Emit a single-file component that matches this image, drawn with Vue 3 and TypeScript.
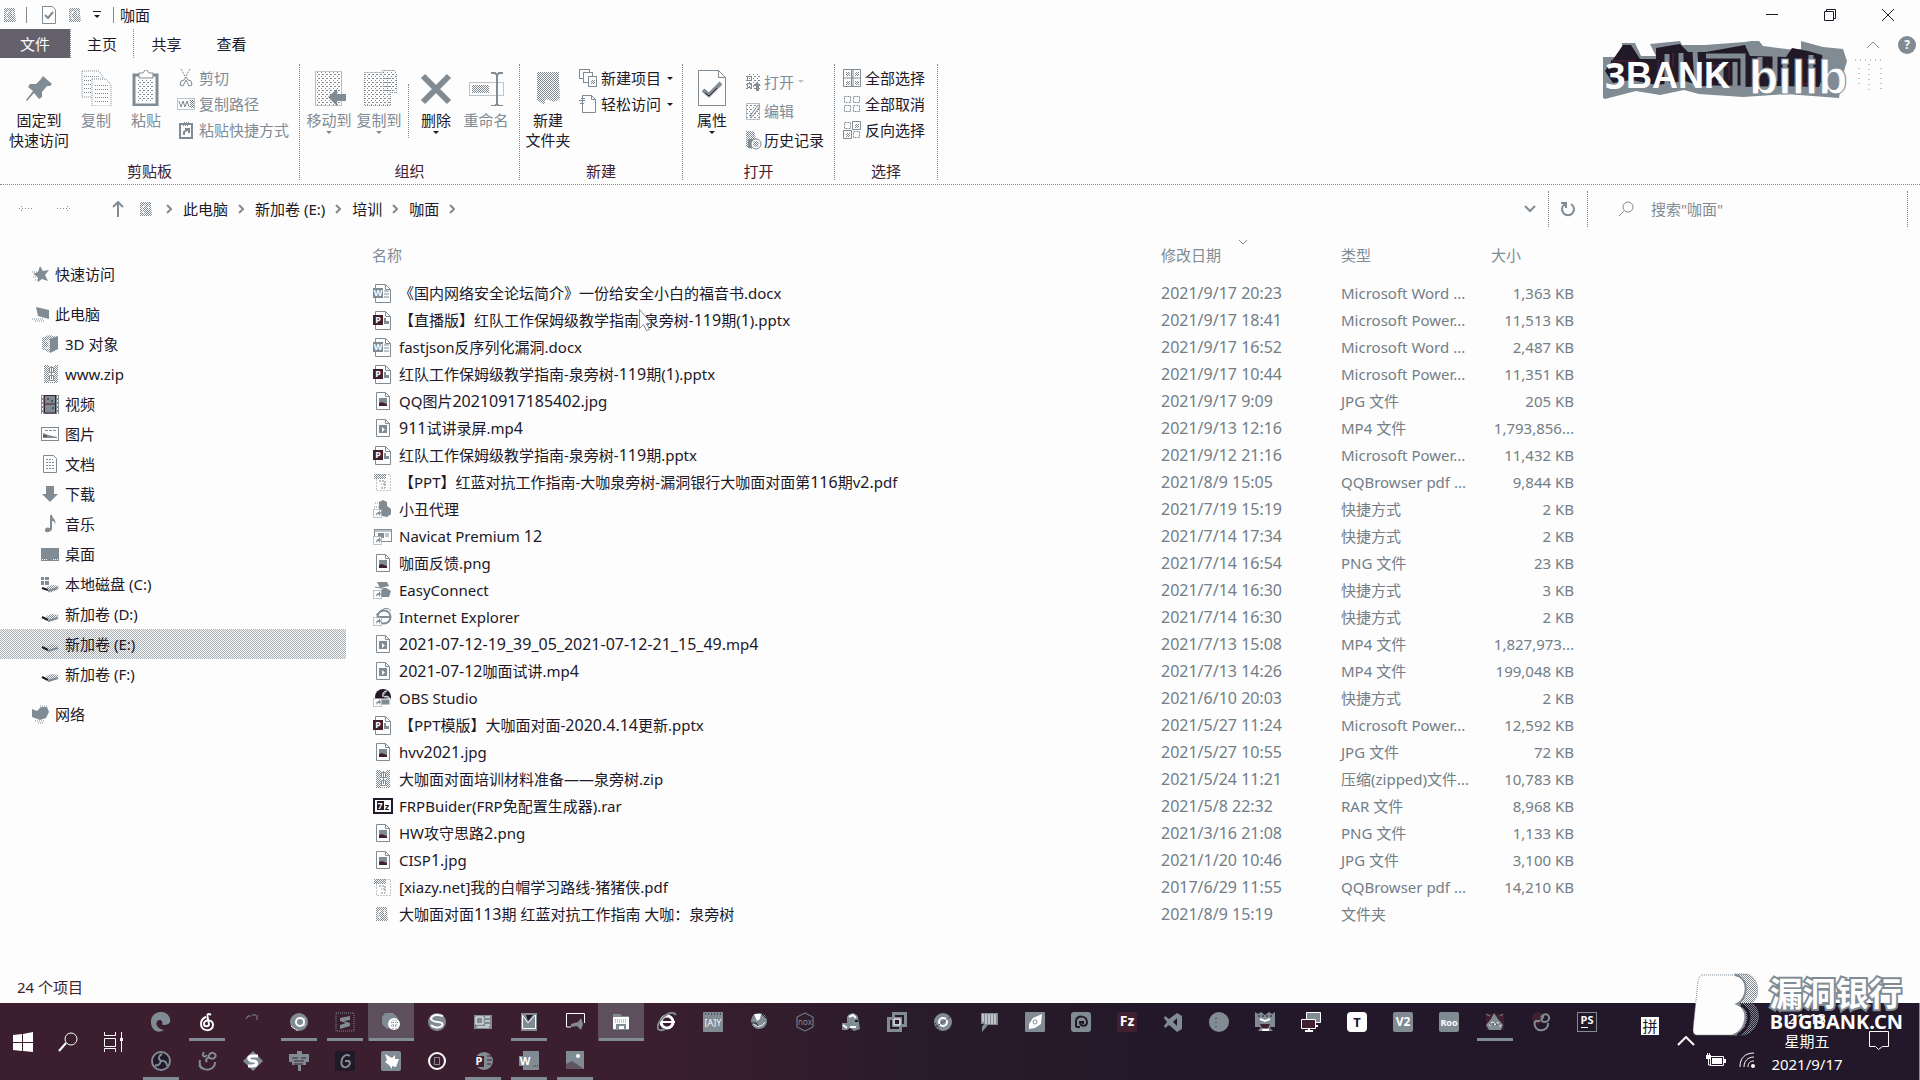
<script setup lang="ts">
interface Run { text: string; num: boolean }
interface FileRow { icon: string; name: string; date: string; type: string; size: string }
interface Place { icon: string; label: string; level: number; selected?: boolean; gap?: boolean }
interface TaskApp { icon: string; name: string; running?: boolean; active?: boolean }

const G = '#808b94'
const W = '#fdfdfd'
const D = '#211828'
const M = '#40202f'
const H = 'url(#halftone)'
const L = 'url(#speckle)'

const sheet = `<path d="M4.5 1.5h9l4 4v13h-13z" fill="${W}" stroke="${G}"/><path d="M13.5 1.5v4h4" fill="none" stroke="${G}"/>`
const badge = (letter: string, fill: string) =>
  `<path d="M3.5 1.5h10l5 5v13h-15z" fill="${W}" stroke="${G}"/><path d="M13.500 1.500v5h5" fill="none" stroke="${G}"/><rect x="1" y="5" width="10" height="10" fill="${fill}"/><text x="6" y="13" text-anchor="middle" font-family="Noto Sans, sans-serif" font-size="9" font-weight="700" fill="${W}">${letter}</text>`
const shortcut = `<rect x="1.500" y="10.500" width="8" height="8" fill="${W}" stroke="${G}" stroke-dasharray="1 1"/><path d="M4 17c0-3 1-4 3-4v-2l2 3-2 3v-2c-1 0-2 0-3 2z" fill="${G}"/>`
const tile = (label: string, fill: string, ink: string, size = 10) =>
  `<rect width="20" height="20" rx="2" fill="${fill}"/><text x="10" y="14" text-anchor="middle" font-family="Noto Sans, sans-serif" font-size="${size}" font-weight="700" fill="${ink}">${label}</text>`

const icons: Record<string, string> = {
  word: badge('W', G) + `<path d="M12 8h5M12 11h5M12 14h5" stroke="${G}"/>`,
  ppt: badge('P', M) + `<path d="M12 8v6h5v-3h-3V8z" fill="${G}"/>`,
  image: sheet + `<rect x="7" y="7" width="8" height="8" fill="${G}"/><path d="M7 15v-3l3-1 2 1 3 1v2z" fill="${M}"/>`,
  video: sheet + `<rect x="7" y="7" width="8" height="8" fill="${G}"/><path d="M10 9v5l3-2.500z" fill="${W}"/>`,
  pdf: `<rect x="4.500" y="2.500" width="14" height="16" fill="none" stroke="${G}" stroke-dasharray="1 2"/><rect x="2" y="2" width="12" height="5" fill="${H}"/><path d="M7 9h6v3H9M13 12v4H8" fill="none" stroke="${G}" stroke-dasharray="2 1"/>`,
  clown: `<path d="M7 3l4-2 4 2v4l4 3v5l-4 3-5-1-3-7z" fill="${G}"/><path d="M3 4h4M2 8h5" stroke="${G}" stroke-dasharray="1 1"/>` + shortcut,
  navicat: `<rect x="2.500" y="3.500" width="17" height="12" fill="${W}" stroke="${G}"/><path d="M3 5h16M13 8h4M13 10h4" stroke="${G}"/><path d="M6 7h6v5H6z" fill="${G}"/>` + shortcut,
  easy: `<path d="M5 2h10l2 4-9 2zM9 10l5-2 5 3-2 6H9z" fill="${G}"/><path d="M3 7l12 2" stroke="${G}"/>` + shortcut,
  ie: `<circle cx="12" cy="10" r="6.500" fill="none" stroke="${G}" stroke-width="2"/><path d="M6 10h12" stroke="${G}" stroke-width="2"/><path d="M4 8Q14-3 19 4" fill="none" stroke="${G}"/>` + shortcut,
  obs: `<circle cx="11" cy="9" r="8" fill="${D}"/><path d="M11 9c-1-4 1-6 4-6M12 9c3-2 6 0 6 3M9 11h9v6H9z" fill="${G}" stroke="${W}"/>` + shortcut,
  zip: `<rect x="4" y="1" width="14" height="18" fill="${H}"/><path d="M9 1h5v17H9z" fill="${W}"/><path d="M11.500 2v13M9.500 3.500h4v5h-4zM9.500 11.500h4v5h-4z" fill="none" stroke="${G}"/>`,
  seven: `<rect x="2" y="3" width="18" height="14" fill="${W}" stroke="${D}" stroke-width="2"/><rect x="5" y="5" width="7" height="9" fill="${D}"/><text x="8" y="13" text-anchor="middle" font-family="Noto Sans, sans-serif" font-size="9" font-weight="700" fill="${W}">7</text><text x="15" y="14" text-anchor="middle" font-family="Noto Sans, sans-serif" font-size="9" font-weight="700" fill="${D}">z</text>`,
  folder: `<path d="M4 3h11v5l1 9H4v-7z" fill="${H}"/><path d="M9 5l-3 5 2 5M12 6l1 5" fill="none" stroke="${W}"/>`,
  star: `<path d="M9 2l3 5 6-1-4 5 3 6-6-2-4 3 0-5-5-3 5-2z" fill="${G}"/><path d="M1 8h5M2 13h5M4 16h4" stroke="${G}" stroke-dasharray="1 1"/>`,
  pc: `<path d="M5 3l13 3v9L7 12z" fill="${G}"/><path d="M1 15h12M4 17h9" stroke="${G}" stroke-dasharray="1 1"/>`,
  cube: `<path d="M2 4l7-3 9 2v12l-8 4-8-4z" fill="${H}"/><path d="M10 5l8-3v13l-8 4z" fill="${G}"/><path d="M5 7h4v7H5" fill="none" stroke="${W}"/>`,
  film: `<rect x="1" y="1" width="18" height="19" fill="${G}"/><path d="M4.500 1v18M15.500 1v18M5 10h11M5 1.500h11M5 19h11" stroke="${M}"/><path d="M2.500 2v18M17.500 2v18" stroke="${W}" stroke-dasharray="2 2"/><path d="M7 5h2M11 7h2M12 14h2" stroke="${D}"/>`,
  picture: `<rect x="1.500" y="3.500" width="17" height="13" fill="${W}" stroke="${G}"/><path d="M3 14v-5l5 2 9 2v1z" fill="${G}"/><path d="M5 6.500h11" stroke="${G}" stroke-dasharray="3 1"/><path d="M3 12h4" stroke="${M}"/>`,
  doc: `<path d="M3.500 1.500h10l3 3v14h-13z" fill="${W}" stroke="${G}"/><path d="M6 5.500h7M6 8.500h8M6 11.500h8M6 14.500h8" stroke="${G}" stroke-dasharray="2 1"/>`,
  down: `<path d="M6 2h8v8h4l-8 8-8-8h4z" fill="${G}"/>`,
  music: `<path d="M10 1h2c0 4 5 4 3 10 0-3-1-4-3-4v8c-1 4-8 4-7 1 0-3 3-3 5-2z" fill="${G}"/>`,
  desktop: `<rect x="1" y="4" width="18" height="13" fill="${G}"/><path d="M2 15.500h5M13 15.500h5" stroke="${W}" stroke-dasharray="1 1"/>`,
  drive: `<path d="M6 12l6-2 7 1-2 4-8 3z" fill="${H}"/><path d="M2 13l6 3" stroke="${D}" stroke-width="2"/><path d="M8 17l10-3" stroke="${G}" stroke-width="2"/>`,
  system: `<path d="M1 3h3v3H1zM5 3h4v3H5zM1 7h3v4H1zM5 7h4v4H5z" fill="${G}"/><path d="M6 13l6-2 7 1-2 4-8 3z" fill="${H}"/><path d="M2 14l6 2" stroke="${D}" stroke-width="2"/><path d="M8 17l10-3" stroke="${G}" stroke-width="2"/>`,
  network: `<path d="M1 5l5 2 4-4 6 0 2 5-3 6-6 2-8-3z" fill="${G}"/><path d="M4 17h10M9 2h7M7 19h5" stroke="${G}" stroke-dasharray="1 1"/>`,
}

const small: Record<string, string> = {
  cut: `<path d="M5 1l5 9M14 1l-5 9" stroke="${G}" stroke-dasharray="2 1" fill="none"/><path d="M10 9l-2 3-3 1-1 4 3 1 2-4 1-2 1 2 2 4 3-1-1-4-3-1z" fill="none" stroke="${G}" stroke-width="1"/>`,
  path: `<rect x="1.500" y="4.500" width="17" height="11" fill="none" stroke="${G}" stroke-dasharray="1 1"/><path d="M3 7l2 6 2-6 2 6 2-6 2 6" fill="none" stroke="${G}" stroke-width="1"/><rect x="14" y="6" width="4" height="8" fill="${H}"/>`,
  link: `<rect x="4" y="4" width="12" height="14" fill="${W}" stroke="${G}" stroke-width="2"/><path d="M7 2h6v4H7z" fill="${H}"/><path d="M8 15l0-3 4-3M9 9h4v4" fill="none" stroke="${G}" stroke-width="2"/>`,
  items: `<rect x="1.500" y="1.500" width="10" height="9" fill="${W}" stroke="${G}"/><rect x="5.500" y="4.500" width="9" height="10" fill="${W}" stroke="${G}"/><rect x="10.500" y="8.500" width="8" height="10" fill="${W}" stroke="${G}"/><path d="M13 12h4v4h-4z" fill="${H}"/>`,
  easy: `<path d="M4.500 1.500h9l4 4v13h-13z" fill="${W}" stroke="${G}"/><path d="M13.500 1.500v4h4M1 6.500h6M2 9.500h4M3 4.500h4" fill="none" stroke="${G}"/>`,
  open: `<rect x="3" y="1" width="14" height="17" fill="${L}"/><path d="M4.500 4.500h4v4h-4zM4.500 11.500h4v4h-4z" fill="none" stroke="${G}"/><path d="M13 19v-5h-3l4-4 4 4h-2v5z" fill="${G}"/>`,
  edit: `<rect x="3.500" y="2.500" width="13" height="16" fill="${L}" stroke="${G}" stroke-dasharray="1 1"/><path d="M7 15l8-11 2 1-7 10z" fill="${W}" stroke="${G}"/>`,
  history: `<path d="M3 1h8l2 8v8l-5 2-5-2z" fill="${H}"/><path d="M5 9h5v9H5z" fill="${G}"/><circle cx="13" cy="14" r="5" fill="${W}" stroke="${G}"/><circle cx="13" cy="14" r="3" fill="${H}"/>`,
  all: `<path d="M1.500 1.500h17v17h-17zM9.500 1v18M11 1.500v17M1 10h18" fill="none" stroke="${G}"/><path d="M4 4h4v4H4zM13 4h4v4h-4zM4 13h4v4H4zM13 13h4v4h-4z" fill="${H}"/>`,
  none: `<path d="M2.500 2.500h6v6h-6zM11.500 2.500h6v6h-6zM2.500 11.500h6v6h-6zM11.500 11.500h6v6h-6z" fill="none" stroke="${G}" stroke-dasharray="2 1"/>`,
  invert: `<path d="M2.500 2.500h6v6h-6zM11.500 11.500h6v6h-6z" fill="none" stroke="${G}" stroke-dasharray="2 1"/><path d="M10.500 1.500h8v8h-8zM1.500 10.500h8v8h-8z" fill="none" stroke="${G}"/><path d="M13 4h4v4h-4zM4 13h4v4H4z" fill="${H}"/>`,
}

const large: Record<string, string> = {
  pin: `<path d="M22 6l9 8-2 2-3 0-5 6 0 5-3 2-5-6-7 8-1-1 7-9-5-4 2-3 6 0 5-5z" fill="${G}"/>`,
  copy: `<path d="M4 1h17l4 6v20H4z" fill="${W}" stroke="${G}" stroke-dasharray="1 1"/><path d="M6 6.500h16M6 10.500h16M6 14.500h10M6 18.500h8M6 22.500h8" stroke="${G}" stroke-dasharray="1 1"/><path d="M14 9h14l5 6v21H14z" fill="${W}" stroke="${G}" stroke-dasharray="1 1"/><path d="M17 15.500h14M17 19.500h14M17 23.500h14M17 27.500h14M17 31.500h14" stroke="${G}" stroke-dasharray="1 1"/>`,
  paste: `<rect x="6" y="5" width="23" height="30" fill="${W}" stroke="${G}" stroke-width="3"/><path d="M10 9h15v23H10z" fill="${L}"/><path d="M11 3h4l2-3h2l2 3h4v5H11z" fill="${W}" stroke="${G}"/>`,
  move: `<path d="M4.500 1.500h26v34h-26z" fill="${L}" stroke="${G}" stroke-dasharray="1 1"/><path d="M17 27l9-8v5h9v7h-9v5z" fill="${G}"/>`,
  copyto: `<path d="M3.500 2.500h18v-2h12l2 4v18h-6v13h-26z" fill="${L}" stroke="${G}" stroke-dasharray="1 1"/><path d="M22 8.500h12M22 12.500h12M22 16.500h12M22 20.500h12" stroke="${G}" stroke-dasharray="2 1"/>`,
  del: `<path d="M5 6l26 26M31 6L5 32" stroke="${G}" stroke-width="6"/>`,
  rename: `<rect x="1.500" y="12.500" width="34" height="13" fill="none" stroke="${G}" stroke-dasharray="1 1"/><rect x="4" y="15" width="17" height="8" fill="${H}"/><path d="M29 5v29M23 3h4l2 2 2-2h4M23 36h4l2-2 2 2h4" fill="none" stroke="${G}" stroke-width="2"/>`,
  newfolder: `<path d="M7 2h22v9l1 18-6 3-8-3-2 6-7-5z" fill="${H}"/>`,
  props: `<path d="M4.500 0.500h20l7 7v28h-27z" fill="${W}" stroke="${G}"/><path d="M24.500 0.500v7h7" fill="none" stroke="${G}"/><path d="M9 20l6 5 12-12" fill="none" stroke="${G}" stroke-width="4"/><path d="M11 23l4 3 8-8" fill="none" stroke="${M}"/>`,
}

const apps: Record<string, string> = {
  edge: `<path d="M10 0c6 0 10 5 9 10-1 3-6 4-9 2 2-1 1-4-2-4-4 1-4 8 5 10-8 5-14-2-13-10C1 3 5 0 10 0z" fill="${G}"/><path d="M8 9c2-1 4 1 2 4 3 2 7 1 9-2" fill="none" stroke="${D}"/>`,
  music: `<path d="M14 3c-4-3-4 1-3 4l1 5c0 3-5 3-5 0 0-5 9-5 9 1 0 7-12 7-12-1 0-4 2-6 5-7" fill="none" stroke="${W}" stroke-width="2"/>`,
  faint: `<path d="M3 7l2-3M9 3h4M14 3v5M5 4h3" stroke="${G}"/>`,
  ring: `<circle cx="10" cy="10" r="9" fill="${G}"/><circle cx="11" cy="10" r="4" fill="none" stroke="${W}" stroke-width="2"/><path d="M15 6v9M2 14l7 5" stroke="${W}" stroke-dasharray="2 1"/>`,
  sublime: `<rect x="1" y="1" width="18" height="18" fill="none" stroke="${G}" stroke-dasharray="1 1"/><path d="M15 4v4L9 9l6 2v3L5 17v-4l6-2-6-2V6z" fill="${G}"/>`,
  wechat: `<path d="M4 1h8l5 5-2 8-9 3-5-5V5z" fill="${G}"/><circle cx="13" cy="12" r="6" fill="${W}"/><path d="M10 10.500h7M10 13.500h6M12 8v9M15 8v9" stroke="${G}" stroke-dasharray="1 1"/>`,
  sogou: `<circle cx="10" cy="10" r="9" fill="${G}"/><path d="M16 4Q5 1 4 7c2 5 14 1 11 7-4 3-9 1-11-1" fill="none" stroke="${W}" stroke-width="2"/>`,
  outlook: `<rect x="1" y="3" width="18" height="14" fill="${G}"/><path d="M3 5h7v7H3zM12 5h5M12 9h5M12 13h5M4 15h12" fill="none" stroke="${W}"/>`,
  vm: `<rect x="2" y="1" width="16" height="18" fill="${G}"/><path d="M3.500 3v13.500h13V3M4 4l5 7 7-8" fill="none" stroke="${W}"/><path d="M7 3h7l-5 6z" fill="${D}"/>`,
  cast: `<path d="M6 15H1.500V1.500h18V11" fill="none" stroke="${W}"/><path d="M6 12l7-2 3-4 2 6-2 6-4-4-6 1z" fill="${G}"/>`,
  explorer: `<path d="M2 2h7l2 2h7v14H2z" fill="${G}"/><path d="M2 5h16v12h-3v-5H5v5H2zM8 14h5v3H8z" fill="${W}"/><path d="M4 8h12M4 10h12" stroke="${G}" stroke-dasharray="1 1"/>`,
  ie: `<circle cx="10" cy="10" r="6" fill="none" stroke="${W}" stroke-width="3"/><path d="M5 10h13" stroke="${W}" stroke-width="2"/><path d="M1 17C-2 11 13-5 19 3M1 17c2 2 5 1 7 0" fill="none" stroke="${G}" stroke-width="2"/>`,
  calc: `<rect width="20" height="20" rx="1" fill="${G}"/><text x="10" y="14" text-anchor="middle" font-family="Noto Sans, sans-serif" font-size="9" fill="${W}">[A]Y</text><path d="M2 2h16" stroke="${D}" stroke-dasharray="1 2"/>`,
  ball: `<circle cx="10" cy="9" r="8" fill="${G}"/><path d="M5 2h7l-1 5-3 2z" fill="${W}"/><path d="M4 11c3 5 9 4 12-1" fill="none" stroke="${W}"/><path d="M2 11h5l2 3M13 2l4 4" fill="none" stroke="${D}"/>`,
  nox: `<path d="M10 1l8 4v10l-8 4-8-4V5z" fill="none" stroke="${G}"/><text x="10" y="13" text-anchor="middle" font-family="Noto Sans, sans-serif" font-size="8" fill="${G}">nox</text>`,
  elephant: `<path d="M1 18v-7h5V5c2-5 9-5 11 0l2 12-6 2-4-3-3 2z" fill="${G}"/><path d="M8 5l4-2 3 3M2 13l4 3M9 15h6" fill="none" stroke="${W}" stroke-width="2"/><path d="M14 9h3" stroke="${D}" stroke-width="2"/>`,
  vmware: `<path d="M1.500 6.500h12v12h-12zM6.500 1.500h12v12h-12z" fill="none" stroke="${G}" stroke-width="3"/><path d="M7 7h6v6H7z" fill="none" stroke="${W}"/>`,
  disc: `<circle cx="10" cy="10" r="9" fill="${G}"/><circle cx="10" cy="10" r="4" fill="none" stroke="${W}" stroke-width="2"/><path d="M3 15l14-10M2 11l4 6" stroke="${D}" stroke-dasharray="1 1"/>`,
  note: `<path d="M2 1h17v12H9l-6 7v-5l2-3H2z" fill="${G}"/><path d="M3 3h14M3 5h14M3 7h14M3 9h14M6 11h11" stroke="${W}" stroke-dasharray="2 1"/>`,
  leaf: `<rect width="20" height="20" rx="1" fill="${G}"/><path d="M17 2l-1 10-6 4-6 1 0-5 4-6z" fill="${W}"/><circle cx="10" cy="10" r="2" fill="none" stroke="${G}"/>`,
  dev: `<rect width="20" height="20" rx="3" fill="${G}"/><path d="M5 15V9c0-6 11-6 11 1 0 5-7 5-7 0h3v2M5 15h4" fill="none" stroke="${D}" stroke-width="2"/>`,
  filezilla: tile('Fz', M, W, 14),
  vscode: `<path d="M14 1l5 3v13l-5 3-8-7-4 3-1-2 3-4-3-4 1-2 4 3zM14 6l-4 4 4 4z" fill="${G}"/>`,
  circle: `<circle cx="10" cy="10" r="10" fill="${G}"/><path d="M7 6v9" stroke="${M}" stroke-dasharray="1 3"/>`,
  rhino: `<path d="M0 0l3 2 3-2 4 3 4-3 3 2 3-2v15H0z" fill="${G}"/><path d="M3 7h14l-2 9 3 3H3l3-4z" fill="${G}"/><path d="M5 12h10l-2 4H7z" fill="${M}"/><path d="M5 7l5 2 5-2M7 18h7" fill="none" stroke="${W}" stroke-width="2"/><path d="M3 4h14" stroke="${D}" stroke-dasharray="2 2"/>`,
  remote: `<path d="M5.500 0.500h14v10h-14z" fill="${G}" stroke="${W}"/><path d="M0.500 7.500h14v9h-14z" fill="${M}" stroke="${W}"/><path d="M4 19h8M8 17v3M16 13v2" stroke="${W}" stroke-width="2"/>`,
  typora: `<rect width="20" height="20" rx="4" fill="${W}"/><text x="10" y="15" text-anchor="middle" font-family="Noto Sans, sans-serif" font-size="13" font-weight="700" fill="${D}">T</text>`,
  v2: tile('V2', G, W, 12),
  rdo: tile('Roo', G, W, 9),
  fire: `<path d="M1 2h18v16H1z" fill="${M}"/><path d="M9 1l4 6 5 6-2 5H4l-3-5 5-6z" fill="${G}"/><path d="M5 14c0-5 4-5 5-1 2-4 6-2 5 2" fill="none" stroke="${W}"/><path d="M1 2l4 2M15 4l3-2" stroke="${G}"/><path d="M5 12h10" stroke="${D}" stroke-dasharray="1 2"/>`,
  swirl: `<circle cx="7" cy="6" r="6" fill="${M}"/><path d="M10 5c7-8 12 4 4 5-4 0-5-4-1-5M4 9c-3 12 14 12 13 2M4 9h5" fill="none" stroke="${G}" stroke-width="2"/>`,
  ps: `<rect x="0.500" y="0.500" width="19" height="19" fill="${D}" stroke="${G}"/><text x="10" y="12" text-anchor="middle" font-family="Noto Sans, sans-serif" font-size="11" font-weight="700" fill="${W}">PS</text><path d="M4 15.500h7" stroke="${W}"/>`,
  obs: `<circle cx="10" cy="10" r="9" fill="${D}" stroke="${G}" stroke-width="2"/><path d="M10 10c-3-2-3-5 1-7M10 10c4-1 6 2 6 5M10 10c-1 4-4 5-6 4" fill="none" stroke="${G}" stroke-width="2"/>`,
  coil: `<path d="M7 1c-3 4 1 6 3 3M12 7c-1-4 3-7 6-4 2 3-2 6-5 4-3-1-5 2-3 4M3 9c-3 13 16 12 15 2M5 18l-3-4" fill="none" stroke="${G}" stroke-width="2"/>`,
  snip: `<path d="M10 0l10 10-10 10L0 10z" fill="${G}"/><path d="M15 5H9c-5 0-4 5 1 5s5 5-1 5H5" fill="none" stroke="${W}" stroke-width="3"/>`,
  robot: `<path d="M0 3h8V0h5v3h7v8h-3v3h-5v6H9v-6H3v-3H0z" fill="${G}"/><path d="M3 7h6M12 7h5M5 10h10M5 13h9" stroke="${M}"/>`,
  gmark: `<rect width="20" height="20" fill="${D}"/><path d="M15 5c-7-5-12 9-6 11 5 1 7-4 5-6h-4" fill="none" stroke="${G}" stroke-width="2"/>`,
  bird: `<rect width="20" height="20" rx="2" fill="${G}"/><path d="M4 3l7 4 3-3v4h4l-3 8-4-1 0 3-3-4-4-3 2-2z" fill="${W}"/>`,
  target: `<ellipse cx="10" cy="10" rx="8" ry="8" fill="none" stroke="${W}" stroke-width="2"/><rect x="7.500" y="6.500" width="5" height="7" fill="none" stroke="${G}"/>`,
  powerpoint: `<circle cx="11" cy="10" r="9" fill="${G}"/><path d="M14 5h5M14 9h5M14 13h4" stroke="${M}"/><rect y="5" width="11" height="11" fill="${M}"/><text x="6" y="14" text-anchor="middle" font-family="Noto Sans, sans-serif" font-size="11" font-weight="700" fill="${W}">P</text>`,
  winword: `<rect x="4" width="16" height="19" fill="${G}"/><path d="M14 15h5" stroke="${M}" stroke-dasharray="1 1"/><rect y="5" width="12" height="10" fill="${G}"/><text x="6" y="14" text-anchor="middle" font-family="Noto Sans, sans-serif" font-size="11" font-weight="700" fill="${W}">W</text>`,
  photo: `<rect x="1" width="18" height="18" fill="${G}"/><path d="M1 13l6-3 12 8H1z" fill="#60555f"/><circle cx="13" cy="5" r="2" fill="${W}"/>`,
}

const files: FileRow[] = [
  { icon: 'word', name: '《国内网络安全论坛简介》一份给安全小白的福音书.docx', date: '2021/9/17 20:23', type: 'Microsoft Word ...', size: '1,363 KB' },
  { icon: 'ppt', name: '【直播版】红队工作保姆级教学指南-泉旁树-119期(1).pptx', date: '2021/9/17 18:41', type: 'Microsoft Power...', size: '11,513 KB' },
  { icon: 'word', name: 'fastjson反序列化漏洞.docx', date: '2021/9/17 16:52', type: 'Microsoft Word ...', size: '2,487 KB' },
  { icon: 'ppt', name: '红队工作保姆级教学指南-泉旁树-119期(1).pptx', date: '2021/9/17 10:44', type: 'Microsoft Power...', size: '11,351 KB' },
  { icon: 'image', name: 'QQ图片20210917185402.jpg', date: '2021/9/17 9:09', type: 'JPG 文件', size: '205 KB' },
  { icon: 'video', name: '911试讲录屏.mp4', date: '2021/9/13 12:16', type: 'MP4 文件', size: '1,793,856...' },
  { icon: 'ppt', name: '红队工作保姆级教学指南-泉旁树-119期.pptx', date: '2021/9/12 21:16', type: 'Microsoft Power...', size: '11,432 KB' },
  { icon: 'pdf', name: '【PPT】红蓝对抗工作指南-大咖泉旁树-漏洞银行大咖面对面第116期v2.pdf', date: '2021/8/9 15:05', type: 'QQBrowser pdf ...', size: '9,844 KB' },
  { icon: 'clown', name: '小丑代理', date: '2021/7/19 15:19', type: '快捷方式', size: '2 KB' },
  { icon: 'navicat', name: 'Navicat Premium 12', date: '2021/7/14 17:34', type: '快捷方式', size: '2 KB' },
  { icon: 'image', name: '咖面反馈.png', date: '2021/7/14 16:54', type: 'PNG 文件', size: '23 KB' },
  { icon: 'easy', name: 'EasyConnect', date: '2021/7/14 16:30', type: '快捷方式', size: '3 KB' },
  { icon: 'ie', name: 'Internet Explorer', date: '2021/7/14 16:30', type: '快捷方式', size: '2 KB' },
  { icon: 'video', name: '2021-07-12-19_39_05_2021-07-12-21_15_49.mp4', date: '2021/7/13 15:08', type: 'MP4 文件', size: '1,827,973...' },
  { icon: 'video', name: '2021-07-12咖面试讲.mp4', date: '2021/7/13 14:26', type: 'MP4 文件', size: '199,048 KB' },
  { icon: 'obs', name: 'OBS Studio', date: '2021/6/10 20:03', type: '快捷方式', size: '2 KB' },
  { icon: 'ppt', name: '【PPT模版】大咖面对面-2020.4.14更新.pptx', date: '2021/5/27 11:24', type: 'Microsoft Power...', size: '12,592 KB' },
  { icon: 'image', name: 'hvv2021.jpg', date: '2021/5/27 10:55', type: 'JPG 文件', size: '72 KB' },
  { icon: 'zip', name: '大咖面对面培训材料准备——泉旁树.zip', date: '2021/5/24 11:21', type: '压缩(zipped)文件...', size: '10,783 KB' },
  { icon: 'seven', name: 'FRPBuider(FRP免配置生成器).rar', date: '2021/5/8 22:32', type: 'RAR 文件', size: '8,968 KB' },
  { icon: 'image', name: 'HW攻守思路2.png', date: '2021/3/16 21:08', type: 'PNG 文件', size: '1,133 KB' },
  { icon: 'image', name: 'CISP1.jpg', date: '2021/1/20 10:46', type: 'JPG 文件', size: '3,100 KB' },
  { icon: 'pdf', name: '[xiazy.net]我的白帽学习路线-猪猪侠.pdf', date: '2017/6/29 11:55', type: 'QQBrowser pdf ...', size: '14,210 KB' },
  { icon: 'folder', name: '大咖面对面113期 红蓝对抗工作指南 大咖：泉旁树', date: '2021/8/9 15:19', type: '文件夹', size: '' },
]

const places: Place[] = [
  { icon: 'star', label: '快速访问', level: 0 },
  { icon: 'pc', label: '此电脑', level: 0, gap: true },
  { icon: 'cube', label: '3D 对象', level: 1 },
  { icon: 'zip', label: 'www.zip', level: 1 },
  { icon: 'film', label: '视频', level: 1 },
  { icon: 'picture', label: '图片', level: 1 },
  { icon: 'doc', label: '文档', level: 1 },
  { icon: 'down', label: '下载', level: 1 },
  { icon: 'music', label: '音乐', level: 1 },
  { icon: 'desktop', label: '桌面', level: 1 },
  { icon: 'system', label: '本地磁盘 (C:)', level: 1 },
  { icon: 'drive', label: '新加卷 (D:)', level: 1 },
  { icon: 'drive', label: '新加卷 (E:)', level: 1, selected: true },
  { icon: 'drive', label: '新加卷 (F:)', level: 1 },
  { icon: 'network', label: '网络', level: 0, gap: true },
]

const crumbs = ['此电脑', '新加卷 (E:)', '培训', '咖面']

const app = (icon: string, running = false, active = false): TaskApp => ({ icon, name: icon, running, active })
const taskRows: TaskApp[][] = [
  [
    app('edge'), app('music', true), app('faint'), app('ring', true), app('sublime', true), app('wechat', true, true),
    app('sogou'), app('outlook'), app('vm', true), app('cast'), app('explorer', true, true), app('ie'), app('calc'),
    app('ball'), app('nox'), app('elephant'), app('vmware'), app('disc'), app('note'), app('leaf'), app('dev'),
    app('filezilla'), app('vscode'), app('circle'), app('rhino'), app('remote'), app('typora'), app('v2'), app('rdo'),
    app('fire', true), app('swirl'), app('ps'),
  ],
  [
    app('obs', true), app('coil'), app('snip'), app('robot'), app('gmark'), app('bird'), app('target'),
    app('powerpoint', true), app('winword', true), app('photo', true),
  ],
]

function runs(text: string): Run[] {
  return text
    .split(/(\d[\d_\-.,:/]*)/)
    .filter((part) => part !== '')
    .map((part) => ({ text: part, num: /^\d/.test(part) }))
}
</script>

<template>
  <div class="screen">
    <svg class="defs" width="0" height="0" aria-hidden="true">
      <defs>
        <pattern id="halftone" width="2" height="2" patternUnits="userSpaceOnUse">
          <path d="M0 0h1v1H0zM1 1h1v1H1z" fill="#808b94" />
        </pattern>
        <pattern id="speckle" width="4" height="4" patternUnits="userSpaceOnUse">
          <path d="M0 0h1v1H0zM2 2h1v1H2zM3 0h1v1H3z" fill="#808b94" />
        </pattern>
      </defs>
    </svg>

    <header class="titlebar">
      <svg class="i20" viewBox="0 0 20 20" v-html="icons.folder"></svg>
      <span class="bar"></span>
      <button class="quick first" aria-label="属性"><svg width="16" height="18" viewBox="0 0 16 18"><path d="M1.500.5h10l3 3v14h-13z" fill="none" stroke="#808b94" /><path d="M4 9l3 3 5-6" fill="none" stroke="#808b94" stroke-width="2" /></svg></button>
      <button class="quick" aria-label="新建文件夹"><svg class="i20" viewBox="0 0 20 20" v-html="icons.folder"></svg></button>
      <button class="quick more" aria-label="自定义"><svg width="8" height="8" viewBox="0 0 8 8"><path d="M0 .5h8" stroke="#211828" /><path d="M1 4h6L4 7z" fill="#211828" /></svg></button>
      <span class="bar"></span>
      <h1>咖面</h1>
      <div class="winbtns">
        <button aria-label="最小化"><svg width="14" height="14"><path d="M1 6.500h12" stroke="#211828" /></svg></button>
        <button aria-label="还原"><svg width="14" height="14"><path d="M1.500 3.500h9v9h-9zM3.500 3V1.500h9v9H11" fill="none" stroke="#211828" /></svg></button>
        <button aria-label="关闭"><svg width="14" height="14"><path d="M1 1l12 12M13 1L1 13" stroke="#211828" /></svg></button>
      </div>
    </header>

    <nav class="tabs">
      <button class="tab file">文件</button>
      <button class="tab current">主页</button>
      <button class="tab">共享</button>
      <button class="tab">查看</button>
      <div class="tabtools">
        <button aria-label="折叠"><svg width="14" height="8"><path d="M1 7l6-6 6 6" fill="none" stroke="#808b94" /></svg></button>
        <button class="help" aria-label="帮助">?</button>
      </div>
    </nav>

    <section class="ribbon">
      <div class="group g-clip">
        <div class="tools">
          <button class="big wide"><svg viewBox="0 0 36 36" v-html="large.pin"></svg>固定到<br />快速访问</button>
          <button class="big off"><svg viewBox="0 0 36 36" v-html="large.copy"></svg>复制</button>
          <button class="big off"><svg viewBox="0 0 36 36" v-html="large.paste"></svg>粘贴</button>
          <div class="stack off">
            <button><svg class="i20" viewBox="0 0 20 20" v-html="small.cut"></svg>剪切</button>
            <button><svg class="i20" viewBox="0 0 20 20" v-html="small.path"></svg>复制路径</button>
            <button><svg class="i20" viewBox="0 0 20 20" v-html="small.link"></svg>粘贴快捷方式</button>
          </div>
        </div>
        <p>剪贴板</p>
      </div>
      <div class="group g-org">
        <div class="tools">
          <button class="big off"><svg viewBox="0 0 36 36" v-html="large.move"></svg>移动到<i class="caret"></i></button>
          <button class="big off"><svg viewBox="0 0 36 36" v-html="large.copyto"></svg>复制到<i class="caret"></i></button>
          <span class="divide"></span>
          <button class="big"><svg viewBox="0 0 36 36" v-html="large.del"></svg>删除<i class="caret"></i></button>
          <button class="big off"><svg viewBox="0 0 36 36" v-html="large.rename"></svg>重命名</button>
        </div>
        <p>组织</p>
      </div>
      <div class="group g-new">
        <div class="tools">
          <button class="big"><svg viewBox="0 0 36 36" v-html="large.newfolder"></svg>新建<br />文件夹</button>
          <div class="stack">
            <button><svg class="i20" viewBox="0 0 20 20" v-html="small.items"></svg>新建项目<i class="caret trailing"></i></button>
            <button><svg class="i20" viewBox="0 0 20 20" v-html="small.easy"></svg>轻松访问<i class="caret trailing"></i></button>
          </div>
        </div>
        <p>新建</p>
      </div>
      <div class="group g-open">
        <div class="tools">
          <button class="big"><svg viewBox="0 0 36 36" v-html="large.props"></svg>属性<i class="caret"></i></button>
          <div class="stack loose">
            <button class="off"><svg class="i20" viewBox="0 0 20 20" v-html="small.open"></svg>打开<i class="caret trailing faint"></i></button>
            <button class="off"><svg class="i20" viewBox="0 0 20 20" v-html="small.edit"></svg>编辑</button>
            <button><svg class="i20" viewBox="0 0 20 20" v-html="small.history"></svg>历史记录</button>
          </div>
        </div>
        <p>打开</p>
      </div>
      <div class="group g-sel">
        <div class="tools">
          <div class="stack">
            <button><svg class="i20" viewBox="0 0 20 20" v-html="small.all"></svg>全部选择</button>
            <button><svg class="i20" viewBox="0 0 20 20" v-html="small.none"></svg>全部取消</button>
            <button><svg class="i20" viewBox="0 0 20 20" v-html="small.invert"></svg>反向选择</button>
          </div>
        </div>
        <p>选择</p>
      </div>
    </section>

    <div class="address">
      <div class="travel">
        <button aria-label="后退"><svg width="16" height="8"><path d="M1 3.500h14M3 1.500h2M3 5.500h2" stroke="#808b94" stroke-dasharray="1 2" /></svg></button>
        <button aria-label="前进"><svg width="16" height="8"><path d="M1 3.500h14M11 1.500h2M11 5.500h2" stroke="#808b94" stroke-dasharray="1 2" /></svg></button>
        <button class="up" aria-label="上移"><svg width="12" height="16"><path d="M6 1v15M1 6l5-5 5 5" fill="none" stroke="#808b94" stroke-width="2" /></svg></button>
      </div>
      <div class="crumbs">
        <svg class="i20" viewBox="0 0 20 20" v-html="icons.folder"></svg>
        <svg class="chev" width="6" height="10"><path d="M1 1l4 4-4 4" fill="none" stroke="#808b94" stroke-width="2" /></svg>
        <template v-for="crumb in crumbs" :key="crumb">
          <a href="#">{{ crumb }}</a>
          <svg class="chev" width="6" height="10"><path d="M1 1l4 4-4 4" fill="none" stroke="#808b94" stroke-width="2" /></svg>
        </template>
      </div>
      <button class="drop" aria-label="历史位置"><svg width="12" height="8"><path d="M1 1l5 5 5-5" fill="none" stroke="#808b94" stroke-width="2" /></svg></button>
      <button class="refresh" aria-label="刷新"><svg width="16" height="16"><path d="M11 3a6 6 0 1 1-6 0M1 2h5v5" fill="none" stroke="#808b94" stroke-width="2" /></svg></button>
      <label class="search">
        <svg width="16" height="16"><circle cx="10" cy="6" r="5" fill="none" stroke="#808b94" /><path d="M6 10l-5 5" stroke="#808b94" /></svg>
        <input type="text" aria-label="搜索" placeholder='搜索"咖面"' />
      </label>
    </div>

    <main class="body">
      <nav class="side">
        <a v-for="place in places" :key="place.label" href="#" :class="{ child: place.level === 1, selected: place.selected, gap: place.gap }">
          <svg class="i20" viewBox="0 0 20 20" v-html="icons[place.icon]"></svg>
          <span>{{ place.label }}</span>
        </a>
      </nav>
      <div class="list">
        <table>
          <colgroup><col class="c-name" /><col class="c-date" /><col class="c-type" /><col class="c-size" /></colgroup>
          <thead>
            <tr>
              <th>名称</th>
              <th class="sorted">修改日期<svg width="10" height="6"><path d="M1 1l4 4 4-4" fill="none" stroke="#808b94" /></svg></th>
              <th>类型</th>
              <th>大小</th>
            </tr>
          </thead>
          <tbody>
            <tr v-for="file in files" :key="file.name">
              <td class="name">
                <div>
                  <svg class="i20" viewBox="0 0 21 20" v-html="icons[file.icon]"></svg>
                  <span><span v-for="(run, i) in runs(file.name)" :key="i" :class="{ num: run.num }">{{ run.text }}</span></span>
                </div>
              </td>
              <td class="num">{{ file.date }}</td>
              <td>{{ file.type }}</td>
              <td class="size">{{ file.size }}</td>
            </tr>
          </tbody>
        </table>
        <svg class="pointer" width="14" height="24"><path d="M1.500 1.500v19l4-4 3 6 3-1-3-6h5z" fill="#fdfdfd" stroke="#808b94" /></svg>
      </div>
    </main>

    <footer class="status">24 个项目</footer>

    <div class="taskbar">
      <div class="system">
        <button aria-label="开始"><svg width="20" height="20"><path d="M0 3l9-1v8H0zM10 2l10-2v10H10zM0 11h9v8l-9-1zM10 11h10v9l-10-1z" fill="#fdfdfd" /></svg></button>
        <button aria-label="搜索"><svg width="20" height="20"><circle cx="13" cy="7" r="6" fill="none" stroke="#fdfdfd" stroke-width="1" /><path d="M8 11l-7 8" stroke="#fdfdfd" stroke-width="2" /></svg></button>
        <button aria-label="任务视图"><svg width="20" height="20"><path d="M1.500 0v3.500h11V0M1.500 6.500h11v8h-11zM1.500 20v-3.500h11V20M18.500 0v20" fill="none" stroke="#fdfdfd" /><path d="M17 6h3v3h-3z" fill="#fdfdfd" /></svg></button>
      </div>
      <div class="apps">
        <div v-for="(row, r) in taskRows" :key="r" class="approw">
          <button v-for="item in row" :key="item.icon" :aria-label="item.name" :class="{ running: item.running, active: item.active }">
            <svg width="20" height="20" viewBox="0 0 20 20" v-html="apps[item.icon]"></svg>
          </button>
        </div>
      </div>
      <div class="tray">
        <button class="ime">拼</button>
        <div class="indicators">
          <svg class="expand" width="18" height="10"><path d="M1 9l8-8 8 8" fill="none" stroke="#fdfdfd" stroke-width="2" /></svg>
          <div class="power">
            <svg width="22" height="16"><path d="M5.500 4.500h13v9h-13z" fill="none" stroke="#fdfdfd" /><path d="M7 6h10v6H7zM19 7h2v4h-2zM1 3h5v4H1z" fill="#fdfdfd" /><path d="M2.500 1v2M4.500 1v2M3.500 7v6H5" fill="none" stroke="#fdfdfd" /></svg>
            <svg width="16" height="16"><path d="M1 15C1 6 6 1 15 1M5 15c0-6 4-10 10-10M9 15c0-4 2-6 6-6" fill="none" stroke="#fdfdfd" /><circle cx="14" cy="14" r="2" fill="#fdfdfd" /></svg>
          </div>
        </div>
        <div class="clock"><span>21:13</span><span>星期五</span><span>2021/9/17</span></div>
        <button class="notice" aria-label="通知"><svg width="22" height="21"><path d="M1.500 1.500h19v15h-6l-4 3-3-3h-6z" fill="none" stroke="#fdfdfd" /></svg></button>
      </div>
    </div>

    <svg class="mark-top" width="284" height="72" viewBox="0 0 284 72" aria-hidden="true">
      <path d="M0 17h19V3h13l6 13h15l-6-12 30-3 2 4h23l40-3 6-1h8l4 5 32 4 6-1v-8l22 6 20 2 4 12-5 17-3 20-40-3-13-1-43 3-44-3-15-4-24 5-24-4-31 8-8-4z" fill="#808b94" />
      <path d="M20 5h8l9 14h16V8l24-4 8 8h18l39-7 5 11 36 1 6-9 16 3 14 4 2 18-5 14-38-1-40 1-40-1-16-5-28 4-26-5-18 3-8-12z" fill="#211828" />
      <g fill="none" stroke="#808b94" stroke-width="5"><path d="M64 14v32M78 13v34M92 12l2 32M103 16h37v32h-34M118 24v20M132 22v25M157 17v17M172 14v27M182 20v27M208 15v34M224 17v31" /></g>
      <g fill="none" stroke="#40202f" stroke-width="2"><path d="M8 21h24M55 20v23M70 13v14M105 26h21v14M165 25v14M191 44h14M219 20v24" /></g>
      <text x="2" y="49" font-family="Noto Sans, sans-serif" font-size="36" font-weight="700" fill="#fdfdfd">3</text>
      <text x="23" y="48" font-family="Liberation Sans, sans-serif" font-size="36" font-weight="700" fill="#fdfdfd">BANK</text>
      <text x="146" y="54" font-family="Liberation Sans, sans-serif" font-size="48" font-weight="700" fill="#fdfdfd" stroke="#808b94">bilib</text>
      <path d="M252 20h28M256 28v20M266 24v26M278 28v22" stroke="#808b94" stroke-dasharray="1 4" />
    </svg>

    <div class="mark-bottom">
      <svg width="72" height="64" viewBox="0 0 72 64" aria-hidden="true">
        <path d="M42 1h12c13 4 14 24 4 29 14 8 6 30-8 32H38z" fill="url(#halftone)" stroke="#808b94" stroke-dasharray="1 1" />
        <path d="M9 2h33c15 2 13 24 2 29 15 7 10 26-5 31H3q-3-1-3-5L5 8q1-5 4-6z" fill="#fdfdfd" stroke="#808b94" stroke-dasharray="1 1" />
        <path d="M42 2c15 3 13 24 2 29 13 5 10 25-3 31" fill="none" stroke="#808b94" stroke-width="2" />
        <path d="M48 32c13 6 9 23-3 30" fill="none" stroke="#211828" stroke-width="3" />
      </svg>
      <div class="brand"><strong>漏洞银行</strong><b>BUGBANK.CN</b></div>
    </div>
  </div>
</template>

<style>
html,
body {
  margin: 0;
  background: #fdfdfd;
}
</style>

<style scoped>
.screen {
  --gray: #808b94;
  --ink: #211828;
  --paper: #fdfdfd;
  position: relative;
  display: flex;
  flex-direction: column;
  min-height: 100vh;
  overflow: hidden;
  background: var(--paper);
  color: var(--ink);
  font: 15px/20px "Noto Sans", "Noto Sans CJK SC", sans-serif;
}
.defs { position: absolute; }
button { padding: 0; border: 0; background: none; color: inherit; font: inherit; white-space: nowrap; }
a { color: inherit; text-decoration: none; }
svg { display: block; flex: none; }
.i20 { width: 20px; height: 20px; }
.num { font-size: 16px; }

.titlebar { display: flex; align-items: center; height: 29px; }
.bar { width: 1px; height: 16px; margin: 0 6px; background: var(--gray); }
.quick { display: flex; justify-content: center; width: 24px; }
.quick.first { width: 28px; margin-left: 2px; }
.quick.more { width: 20px; }
.titlebar h1 { margin: 0; font-size: 15px; font-weight: 400; line-height: 28px; }
.winbtns { display: flex; margin-left: auto; margin-right: 3px; }
.winbtns button { display: flex; justify-content: center; align-items: center; width: 58px; height: 28px; }

.tabs { display: flex; height: 31px; }
.tab { width: 65px; height: 29px; }
.tab.file { width: 70px; background: #65616c; color: var(--paper); }
.tab.current { width: 64px; border: 1px dotted var(--gray); border-width: 0 1px; }
.tabtools { display: flex; align-items: center; gap: 18px; margin-left: auto; padding-right: 4px; }
.help { width: 18px; height: 18px; border-radius: 9px; background: var(--gray); color: var(--paper); font-size: 12px; line-height: 18px; font-weight: 700; }

.ribbon { display: flex; height: 124px; border-bottom: 1px dotted var(--gray); }
.group { display: flex; flex-direction: column; margin: 4px 0; border-right: 1px dotted var(--gray); box-sizing: border-box; }
.group p { margin: auto 0 0; text-align: center; line-height: 18px; color: #40202f; }
.tools { display: flex; padding-top: 6px; }
.g-clip { width: 300px; }
.g-org { width: 220px; }
.g-new { width: 163px; }
.g-open { width: 152px; }
.g-sel { width: 103px; }
.big { display: flex; flex-direction: column; align-items: center; align-self: flex-start; width: 50px; height: 92px; text-align: center; }
.big svg { width: 36px; height: 36px; margin-bottom: 4px; }
.big.wide { width: 78px; margin-right: -7px; }
.off { color: var(--gray); }
.g-org .tools { padding-left: 4px; }
.g-new .tools { padding-left: 3px; }
.g-open .tools { padding-left: 4px; }
.g-sel .tools { padding-left: 7px; }
.caret { width: 0; height: 0; margin-top: 1px; border: 3px solid transparent; border-top-color: currentColor; border-bottom: 0; }
.caret.trailing { margin: 0 0 0 3px; }
.caret.faint { opacity: 0.5; }
.divide { height: 54px; margin: 14px 2px 0 4px; border-left: 1px dotted var(--gray); }
.stack { display: flex; flex-direction: column; margin: -5px 0 0 5px; }
.stack button { display: flex; align-items: center; gap: 3px; height: 26px; }
.g-sel .stack { margin-left: 0; }
.stack.loose { margin: -3px 0 0 6px; }
.stack.loose button { height: 29px; gap: 1px; }

.address { display: flex; align-items: center; height: 48px; }
.travel { display: flex; align-items: center; width: 136px; }
.travel button { width: 16px; margin-left: 18px; }
.travel button + button { margin-left: 22px; }
.travel button.up { margin-left: 40px; }
.crumbs { display: flex; flex: 1; align-items: center; }
.chev { margin: 0 11px 0 10px; }
.drop { width: 36px; display: flex; justify-content: center; }
.refresh { display: flex; justify-content: center; align-items: center; width: 40px; height: 36px; border: 1px dotted var(--gray); border-width: 0 1px; }
.search { display: flex; align-items: center; gap: 17px; width: 289px; height: 36px; margin-left: 30px; margin-right: 12px; border-right: 1px dotted var(--gray); }
.search input { flex: 1; min-width: 0; padding: 0; border: 0; outline: 0; background: none; color: var(--gray); font: inherit; }
.search input::placeholder { color: var(--gray); opacity: 1; }

.body { display: flex; flex: 1; }
.side { display: flex; flex-direction: column; width: 346px; padding-top: 26px; }
.side a { display: flex; align-items: center; gap: 4px; height: 30px; padding-left: 31px; }
.side a.child { padding-left: 40px; gap: 5px; }
.side a.gap { margin-top: 10px; }
.side a.selected { background: conic-gradient(#a4acb2 25%, #fdfdfd 0 50%, #a4acb2 0 75%, #fdfdfd 0) 0 0 / 2px 2px; }
.list { position: relative; flex: 1; padding-left: 26px; }
table { width: 1204px; border-collapse: collapse; table-layout: fixed; }
.c-name { width: 789px; }
.c-date { width: 180px; }
.c-type { width: 150px; }
.c-size { width: 85px; }
th { height: 46px; padding: 0 0 2px; box-sizing: border-box; font-weight: 400; text-align: left; vertical-align: middle; color: var(--gray); }
.sorted { position: relative; }
.sorted svg { position: absolute; left: 77px; top: 6px; }
td { height: 27px; padding: 0; line-height: 26px; color: #737e87; white-space: nowrap; }
.name { color: var(--ink); }
.name div { display: flex; align-items: center; height: 27px; gap: 6px; }
.name .i20 { width: 21px; }
.size { text-align: right; padding-right: 2px; }
.pointer { position: absolute; left: 292px; top: 75px; }

.status { height: 32px; padding: 1px 0 0 17px; line-height: 32px; color: #40202f; }

.taskbar { display: flex; height: 77px; background: linear-gradient(90deg, #3b1f2e 33%, #291b2b 48%, #221829 62%); box-shadow: inset -6px 0 0 -5px var(--gray); color: var(--paper); }
.system { display: flex; width: 138px; }
.system button { display: flex; align-items: center; justify-content: center; width: 45px; }
.apps { flex: 1; display: flex; flex-direction: column; }
.approw { display: flex; height: 38px; }
.approw + .approw { height: 39px; padding-top: 1px; box-sizing: border-box; }
.approw button { display: flex; flex: none; justify-content: center; align-items: flex-start; box-sizing: border-box; width: 46px; padding-top: 9px; background: linear-gradient(#808b94, #808b94) 50% 100% / 0 3px no-repeat; }
.approw button.running { background-size: 36px 3px; }
.approw button.active { background-size: 45px 3px; background-color: #5d4f5c; }
.tray { display: flex; width: 280px; }
.ime { width: 18px; height: 18px; margin: 14px 0 0 1px; background: var(--paper); color: var(--ink); font-size: 15px; line-height: 18px; }
.indicators { width: 80px; margin-left: 18px; padding-top: 33px; }
.power { display: flex; gap: 12px; margin-left: 28px; margin-top: 6px; }
.clock { display: flex; flex-direction: column; align-items: center; width: 74px; margin-left: 13px; padding-top: 4px; }
.clock span { height: 23px; line-height: 23px; }
.notice { align-self: flex-start; margin: 27px 0 0 24px; padding-right: 24px; height: 21px; }

.mark-top { position: absolute; top: 40px; right: 33px; }
.mark-bottom { position: absolute; right: 17px; bottom: 43px; display: flex; gap: 5px; color: var(--paper); }
.brand { display: flex; flex-direction: column; padding-top: 3px; }
.brand strong { font-size: 33px; line-height: 36px; font-weight: 700; -webkit-text-stroke: 4px #808b94; paint-order: stroke fill; }
.brand b { font-size: 20px; line-height: 20px; }
</style>
